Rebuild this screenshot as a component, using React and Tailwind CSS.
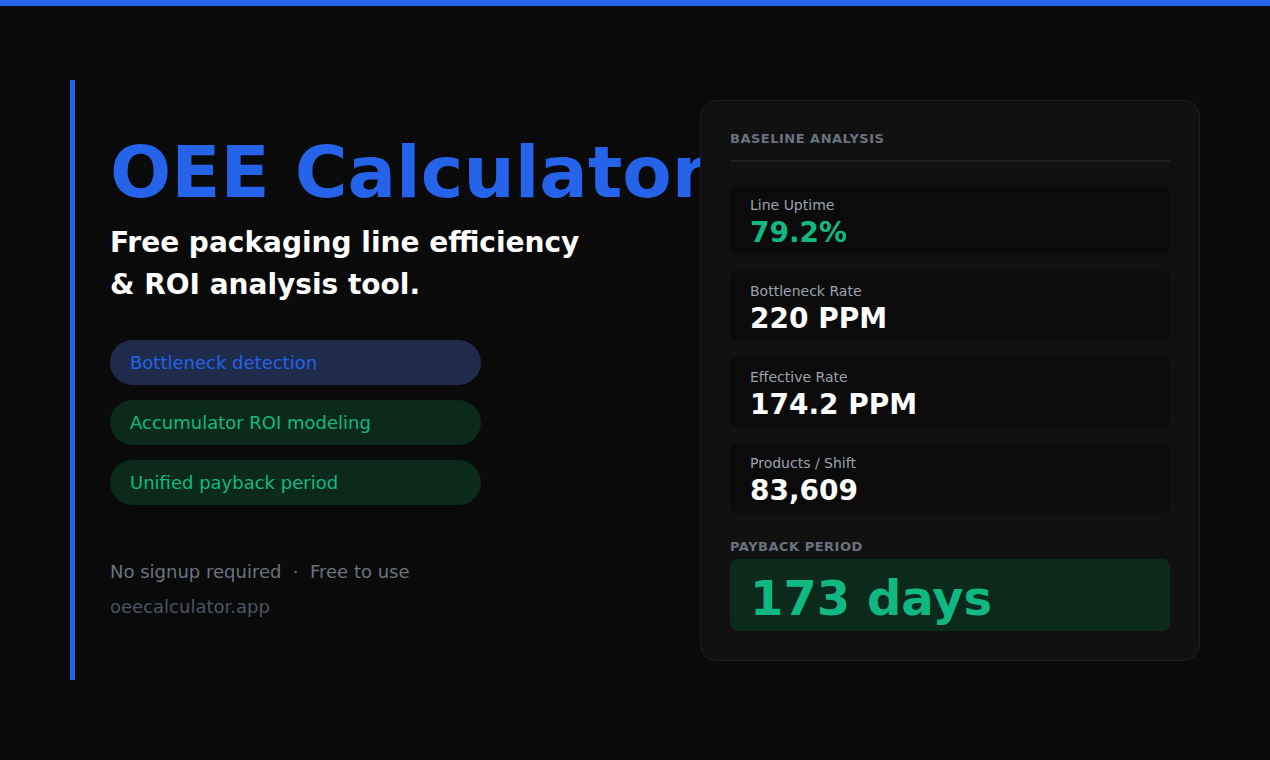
export default function App() {
  const stats = [
    ["Line Uptime", "79.2%", "text-[#10b981]"],
    ["Bottleneck Rate", "220 PPM", "text-white"],
    ["Effective Rate", "174.2 PPM", "text-white"],
    ["Products / Shift", "83,609", "text-white"],
  ];
  return (
    <div className="w-[1270px] h-[760px] bg-[#0a0a0a] overflow-hidden" style={{ fontFamily: '"DejaVu Sans", sans-serif' }}>
      <div className="h-[6px] bg-[#2563eb]" />
      <div className="flex pt-[74px]">
        <div className="ml-[70px] w-[5px] h-[600px] bg-[#2563eb] shrink-0" />
        <div className="pl-[35px] w-[630px] shrink-0 pt-[52px]">
          <div className="text-[72px] leading-[80px] font-bold text-[#2563eb] whitespace-nowrap">OEE Calculator</div>
          <div className="mt-[10px] text-[28px] leading-[42px] font-bold text-white">Free packaging line efficiency<br />&amp; ROI analysis tool.</div>
          <div className="mt-[34px] flex flex-col gap-[15px] w-[371px]">
            <div className="h-[45px] rounded-full bg-[#1e2b4a] px-[20px] flex items-center text-[18px] text-[#2563eb]">Bottleneck detection</div>
            <div className="h-[45px] rounded-full bg-[#0c2a1c] px-[20px] flex items-center text-[18px] text-[#10b981]">Accumulator ROI modeling</div>
            <div className="h-[45px] rounded-full bg-[#0c2a1c] px-[20px] flex items-center text-[18px] text-[#10b981]">Unified payback period</div>
          </div>
          <div className="mt-[53px] text-[18px] text-[#6b7280] whitespace-pre">No signup required  ·  Free to use</div>
          <div className="mt-[8px] text-[18px] text-[#4b5563]">oeecalculator.app</div>
        </div>
        <div className="relative z-10 ml-[-5px] mt-[20px] w-[500px] h-[561px] bg-[#111111] border border-[#1f1f1f] rounded-2xl px-[29px] pt-[30px]">
          <div className="text-[13px] font-bold tracking-[0.5px] text-[#6b7280] leading-[16px]">BASELINE ANALYSIS</div>
          <div className="mt-[13px] h-[2px] bg-[#1f1f1f]" />
          <div className="mt-[23px] flex flex-col gap-[16px]">
            {stats.map(([l, v, c]) => (
              <div key={l} className="h-[70px] bg-[#0b0b0b] rounded-lg px-[20px] pt-[11px]">
                <div className="text-[14px] text-[#9ca3af] leading-[18px]">{l}</div>
                <div className={`mt-[2px] text-[28px] font-bold leading-[34px] ${c}`}>{v}</div>
              </div>
            ))}
          </div>
          <div className="mt-[26px] text-[13px] font-bold tracking-[0.5px] text-[#6b7280] leading-[16px]">PAYBACK PERIOD</div>
          <div className="mt-[4px] h-[72px] bg-[#0c2a1c] rounded-lg px-[20px] pt-[6px] flex items-center text-[48px] font-bold text-[#10b981]">173 days</div>
        </div>
      </div>
    </div>
  );
}
